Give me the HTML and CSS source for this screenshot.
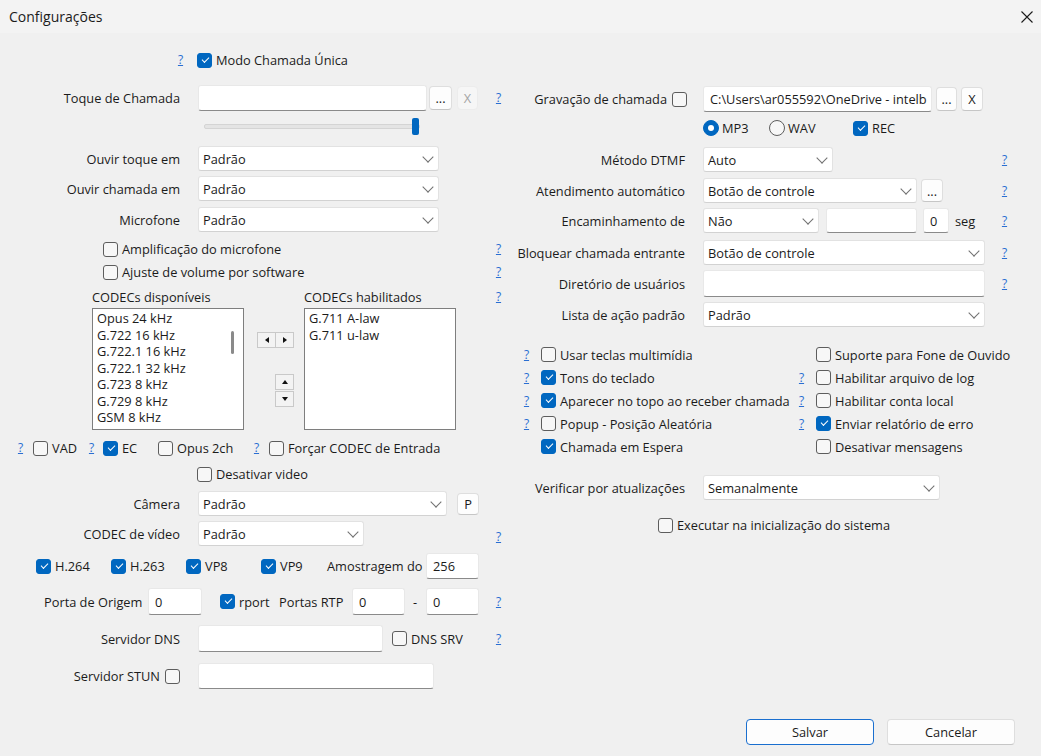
FILE: index.html
```html
<!DOCTYPE html>
<html lang="pt-BR">
<head>
<meta charset="utf-8">
<title>Configurações</title>
<link rel="stylesheet" href="styles.css">
</head>
<body>
<div class="window">
  <div class="titlebar">
    <span class="title">Configurações</span>
    <span class="close"><svg width="12" height="12" viewBox="0 0 12 12"><path d="M0.5 0.5L11.5 11.5M11.5 0.5L0.5 11.5" stroke="#1b1b1b" stroke-width="1.1"/></svg></span>
  </div>

  <div class="content">
    <!-- LEFT COLUMN -->
    <div class="col-left">
      <div class="row r-modo">
        <span class="q">?</span>
        <label class="chk ml-13"><span class="cb on"></span>Modo Chamada Única</label>
      </div>

      <div class="row h26 mt-15">
        <span class="lbl">Toque de Chamada</span>
        <div class="input w229"></div>
        <div class="btn w23 h24 ml-2">...</div>
        <div class="btn btn-dis w21 h24 ml-5">X</div>
        <span class="q q-end">?</span>
      </div>

      <div class="row h17 mt-7 pl-204">
        <div class="slider"><span class="track"></span><span class="thumb"></span></div>
      </div>

      <div class="row h25 mt-11">
        <span class="lbl">Ouvir toque em</span>
        <div class="select w241">Padrão</div>
      </div>
      <div class="row h25 mt-5">
        <span class="lbl">Ouvir chamada em</span>
        <div class="select w241">Padrão</div>
      </div>
      <div class="row h25 mt-6">
        <span class="lbl">Microfone</span>
        <div class="select w241">Padrão</div>
      </div>

      <div class="row h18 mt-8 pl-103">
        <label class="chk"><span class="cb"></span>Amplificação do microfone</label>
        <span class="q q-end">?</span>
      </div>
      <div class="row h18 mt-5 pl-103">
        <label class="chk"><span class="cb"></span>Ajuste de volume por software</label>
        <span class="q q-end">?</span>
      </div>

      <div class="row h18 mt-7 pl-92">
        <span class="w212">CODECs disponíveis</span>
        <span>CODECs habilitados</span>
        <span class="q q-end">?</span>
      </div>

      <div class="row lists mt-2 pl-92">
        <div class="listbox">
          <div class="li">Opus 24 kHz</div>
          <div class="li">G.722 16 kHz</div>
          <div class="li">G.722.1 16 kHz</div>
          <div class="li">G.722.1 32 kHz</div>
          <div class="li">G.723 8 kHz</div>
          <div class="li">G.729 8 kHz</div>
          <div class="li">GSM 8 kHz</div>
          <span class="scroll"></span>
        </div>
        <div class="mover">
          <div class="pair-h">
            <span class="arr"><i class="tri tri-l"></i></span>
            <span class="arr"><i class="tri tri-r"></i></span>
          </div>
          <div class="pair-v">
            <span class="arr"><i class="tri tri-u"></i></span>
            <span class="arr"><i class="tri tri-d"></i></span>
          </div>
        </div>
        <div class="listbox">
          <div class="li">G.711 A-law</div>
          <div class="li">G.711 u-law</div>
        </div>
      </div>

      <div class="row h18 mt-9 pl-17 codec-opts">
        <span class="q">?</span>
        <label class="chk"><span class="cb"></span>VAD</label>
        <span class="q">?</span>
        <label class="chk"><span class="cb on"></span>EC</label>
        <label class="chk"><span class="cb"></span>Opus 2ch</label>
        <span class="q">?</span>
        <label class="chk"><span class="cb"></span>Forçar CODEC de Entrada</label>
      </div>

      <div class="row h18 mt-8 pl-197">
        <label class="chk"><span class="cb"></span>Desativar video</label>
      </div>

      <div class="row h25 mt-8">
        <span class="lbl">Câmera</span>
        <div class="select w249">Padrão</div>
        <div class="btn w22 h22 ml-10">P</div>
      </div>
      <div class="row h25 mt-5">
        <span class="lbl">CODEC de vídeo</span>
        <div class="select w166">Padrão</div>
        <span class="q q-end q-low">?</span>
      </div>

      <div class="row h26 mt-7 pl-36">
        <label class="chk w75"><span class="cb on"></span>H.264</label>
        <label class="chk w75"><span class="cb on"></span>H.263</label>
        <label class="chk w75"><span class="cb on"></span>VP8</label>
        <label class="chk w66"><span class="cb on"></span>VP9</label>
        <span class="w99">Amostragem do</span>
        <div class="input w53">256</div>
      </div>

      <div class="row h27 mt-9 pl-44">
        <span class="w104">Porta de Origem</span>
        <div class="input w54">0</div>
        <label class="chk w59 ml-18"><span class="cb on"></span>rport</label>
        <span class="w73">Portas RTP</span>
        <div class="input w53">0</div>
        <span class="dash">-</span>
        <div class="input w53">0</div>
        <span class="q q-end">?</span>
      </div>

      <div class="row h27 mt-10">
        <span class="lbl">Servidor DNS</span>
        <div class="input w185"></div>
        <label class="chk ml-9"><span class="cb"></span>DNS SRV</label>
        <span class="q q-end">?</span>
      </div>

      <div class="row h26 mt-11">
        <span class="lbl">Servidor STUN<span class="cb ml-5"></span></span>
        <div class="input w236"></div>
      </div>
    </div>

    <!-- RIGHT COLUMN -->
    <div class="col-right">
      <div class="row h26 mt-53">
        <span class="lbl lbl-wide">Gravação de chamada<span class="cb ml-5"></span></span>
        <div class="input w229">C:\Users\ar055592\OneDrive - intelb</div>
        <div class="btn w21 h24 ml-4">...</div>
        <div class="btn w22 h24 ml-4">X</div>
      </div>

      <div class="row h18 mt-7 pl-193">
        <label class="chk w66"><span class="radio on"></span>MP3</label>
        <label class="chk w84"><span class="radio"></span>WAV</label>
        <label class="chk"><span class="cb on"></span>REC</label>
      </div>

      <div class="row h25 mt-10">
        <span class="lbl">Método DTMF</span>
        <div class="select w130">Auto</div>
        <span class="q q-end">?</span>
      </div>
      <div class="row h25 mt-6">
        <span class="lbl">Atendimento automático</span>
        <div class="select w214">Botão de controle</div>
        <div class="btn w22 h23 ml-4">...</div>
        <span class="q q-end">?</span>
      </div>
      <div class="row h25 mt-5">
        <span class="lbl">Encaminhamento de</span>
        <div class="select w116">Não</div>
        <div class="input w91 ml-7"></div>
        <div class="input w26 ml-6">0</div>
        <span class="ml-6">seg</span>
        <span class="q q-end">?</span>
      </div>
      <div class="row h25 mt-7">
        <span class="lbl">Bloquear chamada entrante</span>
        <div class="select w282">Botão de controle</div>
        <span class="q q-end">?</span>
      </div>
      <div class="row h27 mt-5">
        <span class="lbl">Diretório de usuários</span>
        <div class="input w282"></div>
        <span class="q q-end">?</span>
      </div>
      <div class="row h25 mt-5">
        <span class="lbl">Lista de ação padrão</span>
        <div class="select w282">Padrão</div>
      </div>

      <div class="opts mt-16">
        <div class="opt"><span class="qslot"><span class="q">?</span></span><label class="chk"><span class="cb"></span>Usar teclas multimídia</label></div>
        <div class="opt"><span class="qslot"></span><label class="chk"><span class="cb"></span>Suporte para Fone de Ouvido</label></div>
        <div class="opt"><span class="qslot"><span class="q">?</span></span><label class="chk"><span class="cb on"></span>Tons do teclado</label></div>
        <div class="opt"><span class="qslot"><span class="q">?</span></span><label class="chk"><span class="cb"></span>Habilitar arquivo de log</label></div>
        <div class="opt"><span class="qslot"><span class="q">?</span></span><label class="chk"><span class="cb on"></span>Aparecer no topo ao receber chamada</label></div>
        <div class="opt"><span class="qslot"><span class="q">?</span></span><label class="chk"><span class="cb"></span>Habilitar conta local</label></div>
        <div class="opt"><span class="qslot"><span class="q">?</span></span><label class="chk"><span class="cb"></span>Popup - Posição Aleatória</label></div>
        <div class="opt"><span class="qslot"><span class="q">?</span></span><label class="chk"><span class="cb on"></span>Enviar relatório de erro</label></div>
        <div class="opt"><span class="qslot"></span><label class="chk"><span class="cb on"></span>Chamada em Espera</label></div>
        <div class="opt"><span class="qslot"></span><label class="chk"><span class="cb"></span>Desativar mensagens</label></div>
      </div>

      <div class="row h25 mt-17">
        <span class="lbl">Verificar por atualizações</span>
        <div class="select w237">Semanalmente</div>
      </div>

      <div class="row h18 mt-16 pl-148">
        <label class="chk"><span class="cb"></span>Executar na inicialização do sistema</label>
      </div>
    </div>
  </div>

  <div class="footer">
    <div class="btn dlg-btn primary">Salvar</div>
    <div class="btn dlg-btn">Cancelar</div>
  </div>
</div>
</body>
</html>
```

FILE: styles.css
```css
* { box-sizing: border-box; }
html, body { margin: 0; padding: 0; }
body {
  background: #f0f0f0;
  font-family: "Open Sans", "Noto Sans", "DejaVu Sans", sans-serif;
  font-size: 12.8px;
  color: #1b1b1b;
}

.window {
  width: 1041px;
  height: 756px;
  display: flex;
  flex-direction: column;
  background: #f0f0f0;
  overflow: hidden;
}

.titlebar {
  height: 33px;
  flex-shrink: 0;
  background: #f3f3f3;
  display: flex;
  align-items: center;
  justify-content: space-between;
  padding: 0 8px 0 9px;
}
.title { font-size: 14px; }
.close { display: flex; width: 12px; height: 12px; }

.content { flex: 1; display: flex; }
.col-left { width: 510px; flex-shrink: 0; display: flex; flex-direction: column; }
.col-right { flex: 1; display: flex; flex-direction: column; }

.row { display: flex; align-items: center; flex-shrink: 0; white-space: nowrap; }

.lbl {
  width: 180px;
  margin-right: 18px;
  flex-shrink: 0;
  display: flex;
  justify-content: flex-end;
  align-items: center;
  white-space: nowrap;
}
.col-right .lbl { width: 175px; }
.col-right .lbl-wide { width: 177px; margin-right: 16px; }

/* help links */
.q {
  display: inline-block;
  width: 7px;
  flex-shrink: 0;
  color: #2a6ed2;
  text-decoration: underline;
  text-align: center;
  font-size: 12px;
  line-height: 14px;
}
.q-end { margin-left: auto; margin-right: 8px; }
.col-right .q-end { margin-right: 33px; }
.q-low { position: relative; top: 3px; }

/* checkboxes */
.chk { display: inline-flex; align-items: center; white-space: nowrap; flex-shrink: 0; }
.cb {
  width: 15px;
  height: 15px;
  flex-shrink: 0;
  border: 1px solid #5d5d5d;
  border-radius: 3px;
  background: #f7f7f7;
  margin-right: 4px;
  position: relative;
  display: inline-block;
}
.lbl .cb { margin-right: 0; }
.cb.on { background: #0067c0; border-color: #0067c0; }
.cb.on::after {
  content: "";
  position: absolute;
  left: 3.5px;
  top: 3px;
  width: 6px;
  height: 3px;
  border-left: 1.2px solid #fff;
  border-bottom: 1.2px solid #fff;
  transform: rotate(-45deg);
}
.radio {
  width: 16px;
  height: 16px;
  flex-shrink: 0;
  border: 1px solid #5d5d5d;
  border-radius: 50%;
  background: #f7f7f7;
  margin-right: 3px;
  position: relative;
}
.radio.on { background: #0067c0; border-color: #0067c0; }
.radio.on::after {
  content: "";
  position: absolute;
  left: 4px;
  top: 4px;
  width: 6px;
  height: 6px;
  border-radius: 50%;
  background: #fff;
}

/* inputs */
.input {
  height: 100%;
  flex-shrink: 0;
  background: #fff;
  border: 1px solid #e8e8e8;
  border-bottom-color: #8a8a8a;
  border-radius: 3px;
  padding: 0 6px;
  display: flex;
  align-items: center;
  overflow: hidden;
  white-space: nowrap;
}
.select {
  height: 25px;
  flex-shrink: 0;
  background: #fff;
  border: 1px solid #e2e2e2;
  border-bottom-color: #d2d2d2;
  border-radius: 3px;
  padding: 0 4px;
  display: flex;
  align-items: center;
  position: relative;
}
.select::after {
  content: "";
  position: absolute;
  right: 6px;
  top: 6px;
  width: 7px;
  height: 7px;
  border-right: 1px solid #707070;
  border-bottom: 1px solid #707070;
  transform: rotate(45deg);
}

/* buttons */
.btn {
  flex-shrink: 0;
  background: #fdfdfd;
  border: 1px solid #dedede;
  border-bottom-color: #c6c6c6;
  border-radius: 4px;
  display: flex;
  align-items: center;
  justify-content: center;
}
.btn-dis { background: #f6f6f6; border-color: #ececec; color: #a5a5a5; }

/* slider */
.slider { width: 216px; height: 17px; position: relative; }
.track {
  position: absolute;
  left: 0; right: 0; top: 6px;
  height: 5px;
  background: #e4e4e4;
  border: 1px solid #d4d4d4;
  border-radius: 2px;
}
.thumb {
  position: absolute;
  left: 208px; top: 0;
  width: 7px; height: 17px;
  background: #0067c0;
  border-radius: 2px;
}

/* codec lists */
.lists { height: 122px; align-items: stretch; }
.listbox {
  width: 152px;
  flex-shrink: 0;
  background: #fff;
  border: 1px solid #7e7e7e;
  padding: 1px 0 0 4px;
  overflow: hidden;
  position: relative;
}
.li { height: 16.5px; line-height: 16.5px; white-space: nowrap; }
.scroll {
  position: absolute;
  left: 138px; top: 22px;
  width: 3px; height: 23px;
  background: #8a8a8a;
  border-radius: 2px;
}
.mover {
  width: 60px;
  flex-shrink: 0;
  display: flex;
  flex-direction: column;
  align-items: flex-end;
  padding: 24px 10px 0 0;
}
.pair-h { display: flex; }
.pair-v { display: flex; flex-direction: column; margin-top: 26px; gap: 1px; }
.arr {
  width: 19px; height: 16px;
  background: #f3f3f3;
  border: 1px solid #c9c9c9;
  display: flex; align-items: center; justify-content: center;
}
.pair-h .arr + .arr { margin-left: -1px; }
.tri { width: 0; height: 0; display: block; border: 3px solid transparent; }
.tri-l { border-right: 4px solid #111; border-left-width: 0; }
.tri-r { border-left: 4px solid #111; border-right-width: 0; }
.tri-u { border-bottom: 4px solid #111; border-top-width: 0; }
.tri-d { border-top: 4px solid #111; border-bottom-width: 0; }

/* codec options row */
.codec-opts {
  display: grid;
  grid-template-columns: 16px 55px 15px 55px 95px 16px auto;
  align-items: center;
}

.dash { width: 21px; padding-left: 8px; flex-shrink: 0; }

/* option grid (right) */
.opts {
  display: grid;
  grid-template-columns: 275px auto;
  grid-auto-rows: 23px;
  padding-left: 10px;
}
.opt { display: flex; align-items: center; white-space: nowrap; }
.qslot { width: 21px; flex-shrink: 0; padding-left: 3px; display: flex; }

/* footer */
.footer {
  flex-shrink: 0;
  display: flex;
  justify-content: flex-end;
  gap: 13px;
  padding: 0 26px 11px 0;
}
.dlg-btn { width: 128px; height: 26px; }
.dlg-btn.primary { border: 1px solid #1a6fcf; }

/* sizes */
.h17 { height: 17px; } .h18 { height: 18px; } .h22 { height: 22px; } .h23 { height: 23px; }
.h24 { height: 24px; } .h25 { height: 25px; } .h26 { height: 26px; } .h27 { height: 27px; }
.r-modo { height: 20px; margin-top: 17px; padding-left: 177px; }
.w21 { width: 21px; } .w22 { width: 22px; } .w23 { width: 23px; } .w26 { width: 26px; }
.w53 { width: 53px; } .w54 { width: 54px; } .w59 { width: 59px; } .w66 { width: 66px; }
.w73 { width: 73px; flex-shrink: 0; } .w75 { width: 75px; } .w84 { width: 84px; } .w91 { width: 91px; }
.w99 { width: 99px; flex-shrink: 0; } .w104 { width: 104px; flex-shrink: 0; }
.w116 { width: 116px; } .w130 { width: 130px; } .w166 { width: 166px; } .w185 { width: 185px; }
.w212 { width: 212px; flex-shrink: 0; } .w214 { width: 214px; } .w229 { width: 229px; }
.w236 { width: 236px; } .w237 { width: 237px; } .w241 { width: 241px; } .w249 { width: 249px; }
.w282 { width: 282px; }

.mt-2 { margin-top: 2px; } .mt-5 { margin-top: 5px; } .mt-6 { margin-top: 6px; } .mt-7 { margin-top: 7px; }
.mt-8 { margin-top: 8px; } .mt-9 { margin-top: 9px; } .mt-10 { margin-top: 10px; } .mt-11 { margin-top: 11px; }
.mt-15 { margin-top: 15px; } .mt-16 { margin-top: 16px; } .mt-17 { margin-top: 17px; } .mt-53 { margin-top: 53px; }

.ml-2 { margin-left: 2px; } .ml-4 { margin-left: 4px; } .ml-5 { margin-left: 5px; } .ml-6 { margin-left: 6px; }
.ml-7 { margin-left: 7px; } .ml-9 { margin-left: 9px; } .ml-10 { margin-left: 10px; } .ml-13 { margin-left: 13px; }
.ml-18 { margin-left: 18px; }

.pl-17 { padding-left: 17px; } .pl-36 { padding-left: 36px; } .pl-44 { padding-left: 44px; }
.pl-92 { padding-left: 92px; } .pl-103 { padding-left: 103px; } .pl-148 { padding-left: 148px; }
.pl-193 { padding-left: 193px; } .pl-197 { padding-left: 197px; } .pl-204 { padding-left: 204px; }
```
